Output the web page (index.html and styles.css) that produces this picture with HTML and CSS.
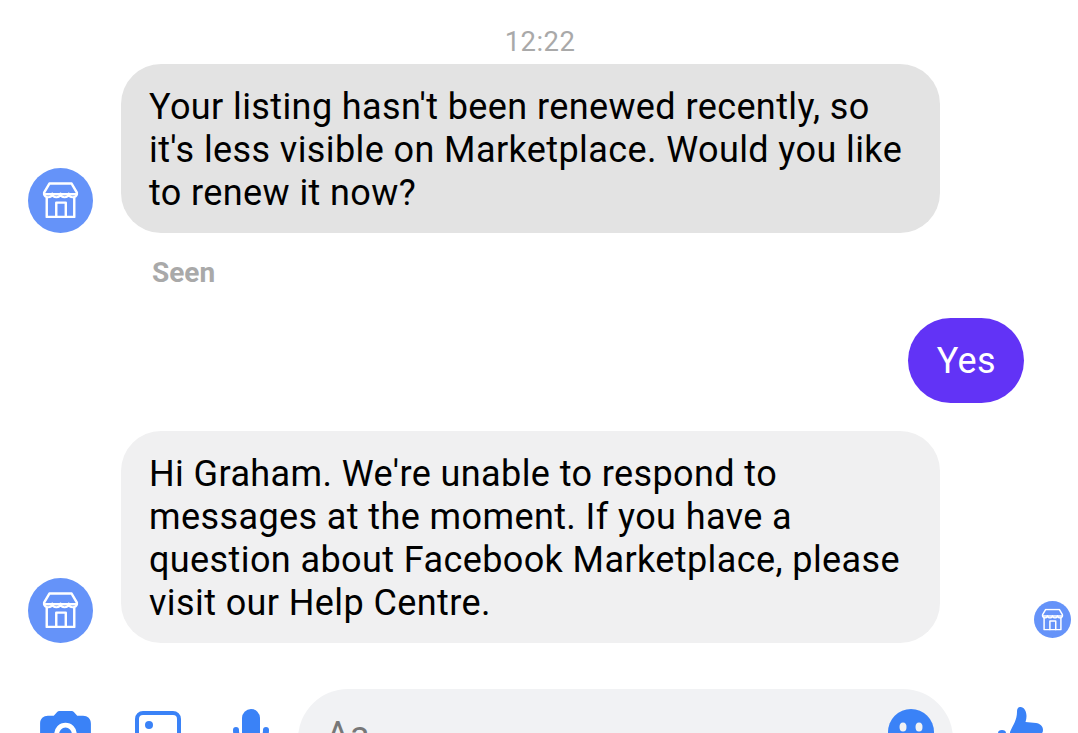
FILE: index.html
```html
<!DOCTYPE html>
<html lang="en">
<head>
<meta charset="utf-8">
<title>Messenger</title>
<link rel="stylesheet" href="styles.css">
</head>
<body>
<svg class="defs" width="0" height="0" aria-hidden="true">
  <symbol id="store" viewBox="0 0 34 34">
    <g fill="none" stroke="#fff" stroke-width="2.300" stroke-linejoin="round" stroke-linecap="round">
      <path d="M4 15v18h26V15"/>
      <path d="M6.500 1.500h21l5 8.500v1.500H1.500V10z"/>
      <path d="M1.500 11a3.900 3.900 0 0 0 7.750 0a3.900 3.900 0 0 0 7.750 0a3.900 3.900 0 0 0 7.750 0a3.900 3.900 0 0 0 7.750 0" stroke-width="2"/>
      <path d="M13 33V19.500h9V33"/>
    </g>
  </symbol>
</svg>
<main class="thread">
  <div class="time">12:22</div>
  <div class="row">
    <svg class="avatar" viewBox="0 0 65 65"><circle cx="32.500" cy="32.500" r="32.500" fill="#6593f9"/><use href="#store" x="14.500" y="14" width="36" height="36"/></svg>
    <div class="bubble grey">Your listing hasn't been renewed recently, so<br>it's less visible on Marketplace. Would you like<br>to renew it now?</div>
  </div>
  <div class="seen">Seen</div>
  <div class="row mine">
    <div class="bubble purple">Yes</div>
  </div>
  <div class="row second">
    <svg class="avatar" viewBox="0 0 65 65"><circle cx="32.500" cy="32.500" r="32.500" fill="#6593f9"/><use href="#store" x="14.500" y="14" width="36" height="36"/></svg>
    <div class="bubble light">Hi Graham. We're unable to respond to<br>messages at the moment. If you have a<br>question about Facebook Marketplace, please<br>visit our Help Centre.</div>
    <svg class="receipt" viewBox="0 0 37 37"><circle cx="18.500" cy="18.500" r="18.500" fill="#6593f9"/><use href="#store" x="7.500" y="7.500" width="22" height="22"/></svg>
  </div>
</main>
<footer class="composer">
  <div class="tools">
    <svg class="ic cam" viewBox="0 0 52 44"><path fill="#3a82f7" fill-rule="evenodd" d="M8 6h6l3-3.500C18 1.200 19 1 20.500 1h11c1.500 0 2.500.2 3.500 1.500L38 6h6c4.500 0 8 3 8 8v22c0 5-3.500 8-8 8H8c-4.500 0-8-3-8-8V14c0-5 3.500-8 8-8zM26 13a11.500 11.500 0 1 0 0 23 11.500 11.500 0 0 0 0-23zm0 5a6.500 6.500 0 1 1 0 13 6.500 6.500 0 0 1 0-13z"/></svg>
    <svg class="ic pic" viewBox="0 0 46 44"><rect x="2" y="2" width="42" height="40" rx="6" fill="none" stroke="#3a82f7" stroke-width="4"/><circle cx="14" cy="14" r="4" fill="#3a82f7"/><path fill="#3a82f7" d="M4 36l10-5 4 3 7-10 17 14v5H4z"/></svg>
    <svg class="ic mic" viewBox="0 0 36 44"><rect x="9" y="0" width="18" height="32" rx="9" fill="#3a82f7"/><path fill="none" stroke="#3a82f7" stroke-width="6" stroke-linecap="round" d="M3 21c0 9 6 15 15 15s15-6 15-15M18 36v8"/></svg>
  </div>
  <div class="field">
    <span class="hint">Aa</span>
    <svg class="ic emoji" viewBox="0 0 46 46"><circle cx="23" cy="23" r="23" fill="#3a82f7"/><ellipse cx="15" cy="18" rx="3.500" ry="4.500" fill="#f1f2f4"/><ellipse cx="31" cy="18" rx="3.500" ry="4.500" fill="#f1f2f4"/></svg>
  </div>
  <svg class="ic like" viewBox="0 0 46 46"><path fill="#3a82f7" d="M0 26c0-2 1.500-3 4-3s4 1 4 3v14c0 2-1.500 3-4 3s-4-1-4-3zM12 25C15 18 19 13 19 5 19 1 20.500 0 22.500 0 26 0 28.500 4 28.500 9c0 2-.3 4-1 6L38 16c4 .5 7 3 7 7 0 2-1 3.500-2 4.500V40c0 3-2 5-5 5H17c-3 0-5-2-5-6z"/></svg>
</footer>
</body>
</html>
```
FILE: styles.css
```css
html, body {
  margin: 0;
  height: 733px;
  overflow: hidden;
  background: #fff;
}
body {
  font-family: Roboto, "Liberation Sans", sans-serif;
  font-size: 36px;
  letter-spacing: .4px;
  line-height: 43px;
  color: #000;
}
.defs { display: block; height: 0; }
.thread { padding-top: 25px; }
.time {
  height: 39px;
  padding-left: 2px;
  line-height: 34px;
  font-size: 27.500px;
  text-align: center;
  color: #a9a9a9;
  letter-spacing: .4px;
}
.row {
  display: flex;
  align-items: flex-end;
  padding-left: 28px;
  gap: 28px;
}
.row.mine { justify-content: flex-end; padding-right: 54px; margin-top: 28px; }
.row.second { margin-top: 28px; }
.avatar { width: 65px; height: 65px; flex: none; }
.bubble {
  padding: 22px 28px 18px;
  border-radius: 40px;
  white-space: nowrap;
}
.grey, .light { width: 763px; }
.grey { background: #e3e3e3; }
.light { background: #f0f0f1; }
.purple { background: #6233f6; color: #fff; padding: 22px 28px 20px 29px; border-radius: 42.500px; }
.seen {
  margin: 22px 0 0 152px;
  height: 35px;
  line-height: 35px;
  font-size: 28px;
  letter-spacing: 0;
  font-weight: 700;
  color: #a9a9a9;
}
.receipt { width: 37px; height: 37px; flex: none; margin: 0 0 5px 66px; }
.composer {
  display: flex;
  align-items: flex-start;
  margin-top: 46px;
  padding-left: 40px;
}
.tools { display: flex; align-items: flex-start; width: 258px; gap: 44px; }
.ic { display: block; flex: none; }
.cam { width: 51px; height: 43px; margin-top: 21px; }
.pic { width: 46px; height: 44px; margin-top: 22px; }
.mic { width: 36px; height: 44px; margin-top: 20px; margin-left: 8px; }
.field {
  display: flex;
  justify-content: space-between;
  align-items: flex-start;
  width: 655px;
  height: 100px;
  box-sizing: border-box;
  padding: 20px 19px 0 28px;
  background: #f1f2f4;
  border-radius: 50px;
}
.hint { color: #777; line-height: 43px; margin-top: 5px; }
.emoji { width: 46px; height: 46px; }
.like { width: 46px; height: 46px; margin: 18px 0 0 45px; }
```
